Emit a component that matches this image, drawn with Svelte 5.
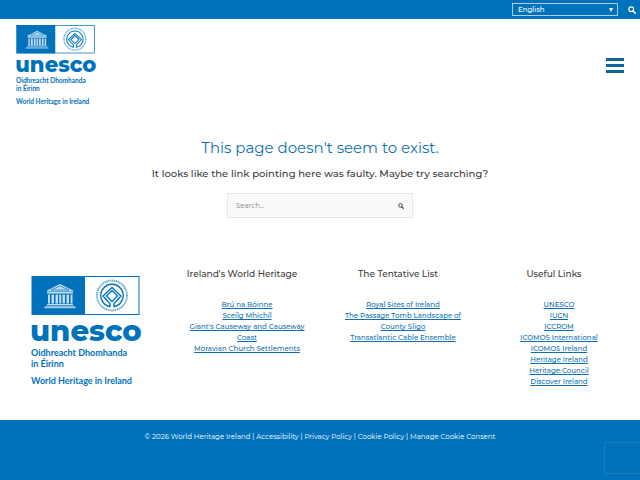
<script>
  let query = $state('');
  let language = $state('English');

  const columns = [
    {
      title: "Ireland's World Heritage",
      links: [
        'Brú na Bóinne',
        'Sceilg Mhichíl',
        "Giant's Causeway and Causeway Coast",
        'Moravian Church Settlements',
      ],
    },
    {
      title: 'The Tentative List',
      links: [
        'Royal Sites of Ireland',
        'The Passage Tomb Landscape of County Sligo',
        'Transatlantic Cable Ensemble',
      ],
    },
    {
      title: 'Useful Links',
      links: [
        'UNESCO',
        'IUCN',
        'ICCROM',
        'ICOMOS International',
        'ICOMOS Ireland',
        'Heritage Ireland',
        'Heritage Council',
        'Discover Ireland',
      ],
    },
  ];

  const legal = ['Accessibility', 'Privacy Policy', 'Cookie Policy', 'Manage Cookie Consent'];
</script>

{#snippet logo()}
  <svg class="logo" viewBox="0 0 110 110" role="img" aria-label="UNESCO World Heritage in Ireland">
    <rect x="1" y="0.5" width="107" height="38" fill="#fff" stroke="#0072bc" />
    <rect x="1" y="0" width="53" height="39" fill="#0072bc" />
    <!-- temple -->
    <g fill="#c3ddf1">
      <path d="M29 8 L43 15 H15 Z" />
      <rect x="16" y="15.5" width="26" height="2" />
      <rect x="17" y="18.5" width="2" height="9" />
      <rect x="20.5" y="18.5" width="2.5" height="9" />
      <rect x="24.5" y="18.5" width="2.5" height="9" />
      <rect x="28.2" y="18.5" width="2" height="9" />
      <rect x="31.5" y="18.5" width="2.5" height="9" />
      <rect x="35.5" y="18.5" width="2.5" height="9" />
      <rect x="39.5" y="18.5" width="2" height="9" />
      <rect x="16" y="28" width="26" height="1" />
      <rect x="14.5" y="29.7" width="29" height="1" />
      <rect x="13" y="31.2" width="32" height="1" />
    </g>
    <path d="M29 10 L38 14 H20 Z" fill="none" stroke="#0072bc" stroke-width="0.7" />
    <!-- world heritage emblem -->
    <g fill="none" stroke="#0072bc">
      <circle cx="81" cy="19.5" r="15" stroke-width="1.8" stroke-dasharray="1.2 0.7" opacity="0.7" />
      <path
        d="M79 30.5 A11.2 11.2 0 1 1 83 30.5 V27.5 L90 20 L81 11.5 L72 20 L79 27.5 Z"
        stroke-width="1.4"
      />
      <path d="M81 14.5 L86.5 20 L81 25.5 L75.5 20 Z" stroke-width="1.4" />
    </g>
    <g fill="#0072bc">
      <text class="wordmark" x="-1" y="65">unesco</text>
      <text class="caption" x="0" y="80">Oidhreacht Dhomhanda</text>
      <text class="caption" x="0" y="91">in Éirinn</text>
      <text class="caption" x="0" y="108">World Heritage in Ireland</text>
    </g>
  </svg>
{/snippet}

{#snippet searchIcon()}
  <svg class="search-icon" viewBox="0 0 16 16" aria-hidden="true">
    <circle cx="6.5" cy="6.5" r="4.8" fill="none" stroke="currentColor" stroke-width="2.4" />
    <path d="M10 10 L14.5 14.5" stroke="currentColor" stroke-width="3" stroke-linecap="round" />
  </svg>
{/snippet}

<div class="page">
  <div class="top-bar">
    <div class="language">
      <select aria-label="Language" bind:value={language}>
        <option>English</option>
        <option>Gaeilge</option>
      </select>
    </div>
    <button class="top-search" type="button" aria-label="Search">{@render searchIcon()}</button>
  </div>

  <header>
    <a class="brand" href="/">{@render logo()}</a>
    <button class="menu" type="button" aria-label="Main menu">
      <svg viewBox="0 0 18 15" aria-hidden="true">
        <path d="M0 1.5 H18 M0 7.5 H18 M0 13.5 H18" stroke="#0f649f" stroke-width="3" />
      </svg>
    </button>
  </header>

  <main>
    <h1>This page doesn't seem to exist.</h1>
    <p>It looks like the link pointing here was faulty. Maybe try searching?</p>
    <form role="search" onsubmit={(event) => event.preventDefault()}>
      <input type="search" aria-label="Search for" placeholder="Search..." bind:value={query} />
      <button type="submit" aria-label="Submit search">{@render searchIcon()}</button>
    </form>
  </main>

  <footer>
    <div class="widgets">
      <a class="footer-brand" href="/">{@render logo()}</a>
      {#each columns as column}
        <section>
          <h2>{column.title}</h2>
          <ul>
            {#each column.links as link}
              <li><a href="/">{link}</a></li>
            {/each}
          </ul>
        </section>
      {/each}
    </div>
    <div class="legal">
      © 2026 World Heritage Ireland{#each legal as item}{' | '}<a href="/">{item}</a>{/each}
      <div class="badge"></div>
    </div>
  </footer>
</div>

<style>
  :global(body) {
    margin: 0;
    background: #fff;
  }

  .page {
    display: flex;
    flex-direction: column;
    min-height: 100vh;
    overflow-x: hidden;
    color: #3a3a3a;
    font-family: Montserrat, Inter, sans-serif;
    font-size: 7px;
    line-height: 11px;
  }

  a {
    color: #0f70b0;
  }

  button {
    display: flex;
    padding: 0;
    border: 0;
    background: none;
    color: inherit;
    cursor: pointer;
  }

  .logo {
    display: block;
    width: 100%;
    overflow: visible;
  }

  .wordmark {
    font-family: Montserrat, Inter, sans-serif;
    font-size: 29px;
    font-weight: 800;
  }

  .caption {
    font-family: Lato, sans-serif;
    font-size: 9px;
    font-weight: 700;
  }

  .search-icon {
    width: 8px;
    height: 8px;
  }

  .top-bar {
    display: flex;
    align-items: center;
    justify-content: flex-end;
    gap: 10px;
    height: 19px;
    padding-right: 4px;
    background: #0072bc;
    color: #fff;
  }

  .language {
    position: relative;
  }

  .language::after {
    content: "";
    position: absolute;
    top: 5px;
    right: 5px;
    border: 2px solid transparent;
    border-top: 4px solid #fff;
    border-bottom: 0;
    pointer-events: none;
  }

  select {
    display: block;
    box-sizing: border-box;
    width: 106px;
    height: 13px;
    padding: 0 5px;
    appearance: none;
    border: 1px solid #a9cfec;
    border-radius: 0;
    background: #0072bc;
    color: #fff;
    font: 500 7px/11px Montserrat, Inter, sans-serif;
  }

  header {
    display: flex;
    align-items: center;
    justify-content: space-between;
    padding: 6px 16px 3px;
  }

  .brand {
    width: 80px;
  }

  .menu svg {
    width: 18px;
    height: 15px;
  }

  main {
    display: flex;
    flex-direction: column;
    align-items: center;
    padding: 28px 16px 48px;
    text-align: center;
  }

  h1 {
    margin: 0;
    color: #0f70b0;
    font-size: 15px;
    font-weight: 400;
    line-height: 24px;
  }

  p {
    margin: 5px 0 10px;
    font-size: 10px;
    font-weight: 500;
    line-height: 18px;
  }

  form {
    display: flex;
    align-items: center;
    box-sizing: border-box;
    width: 186px;
    height: 25px;
    padding: 0 8px;
    border: 1px solid #e7e7e7;
    background: #fafafa;
  }

  input {
    flex: 1;
    min-width: 0;
    padding: 0;
    border: 0;
    outline: 0;
    background: none;
    color: #555;
    font: 400 7px/11px Montserrat, Inter, sans-serif;
  }

  input::placeholder {
    color: #808080;
  }

  form .search-icon {
    width: 6px;
    height: 6px;
  }

  footer {
    display: flex;
    flex: 1;
    flex-direction: column;
  }

  .widgets {
    display: grid;
    grid-template-columns: repeat(4, 1fr);
    padding: 0 8px 33px;
  }

  .footer-brand {
    justify-self: center;
    width: 110px;
    padding-top: 10px;
  }

  section {
    padding: 0 10px;
    text-align: center;
  }

  h2 {
    margin: 0 0 17px;
    font-size: 9px;
    font-weight: 500;
    line-height: 16px;
    white-space: nowrap;
  }

  ul {
    margin: 0 0 0 10px;
    padding: 0;
    list-style: none;
    font-weight: 500;
  }

  .legal {
    position: relative;
    flex: 1;
    padding: 11px 16px 32px;
    background: #0072bc;
    color: #fff;
    text-align: center;
  }

  .legal a {
    color: inherit;
    text-decoration: none;
  }

  .badge {
    position: absolute;
    right: 0;
    bottom: 6px;
    width: 35px;
    height: 30px;
    border: 1px solid #1c7cba;
    border-right: 0;
  }
</style>
